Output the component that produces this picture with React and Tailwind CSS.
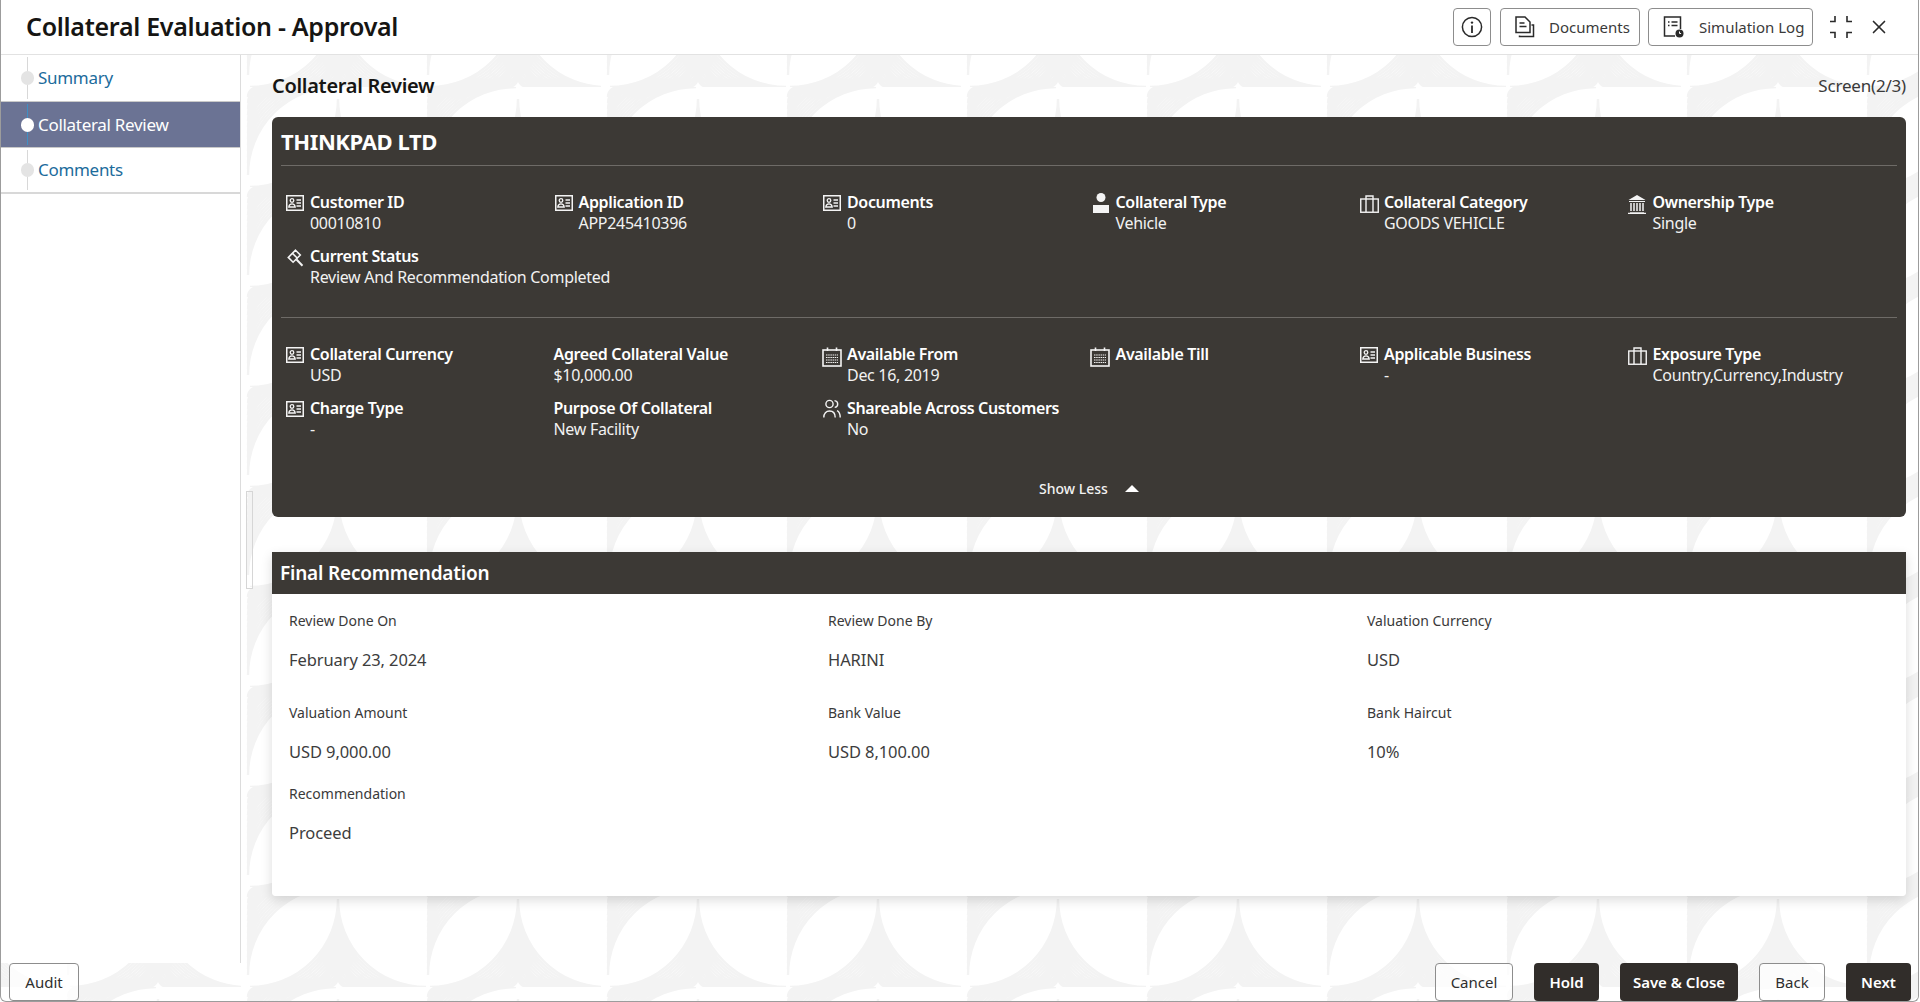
import { X } from "lucide-react";

const font = "font-['Noto_Sans','Open_Sans',sans-serif]";

function IdCard() {
  return (
    <svg width="18" height="16" viewBox="0 0 18 16" fill="none" stroke="currentColor" className="shrink-0">
      <rect x="0.75" y="0.75" width="16.5" height="14.5" strokeWidth="1.5" />
      <circle cx="6" cy="5.5" r="1.8" strokeWidth="1.3" />
      <path d="M2.8 12c.3-2.4 1.6-3.2 3.2-3.2s2.9.8 3.2 3.2z" strokeWidth="1.3" />
      <path d="M10.5 5h4.5M10.5 8h4.5M10.5 11h4.5" strokeWidth="1.4" />
    </svg>
  );
}

function Calendar() {
  return (
    <svg width="20" height="20" viewBox="0 0 20 20" fill="none" stroke="currentColor" className="shrink-0 -ml-[1px]">
      <rect x="1" y="3" width="18" height="16" strokeWidth="1.6" />
      <path d="M5.5 0.5v3.5M14.5 0.5v3.5" strokeWidth="1.6" />
      <path d="M4 8h12M4 10.5h12M4 13h12M4 15.5h12" strokeWidth="1.2" strokeDasharray="1.5 0.7" />
    </svg>
  );
}

function Person() {
  return (
    <svg width="18" height="20" viewBox="0 0 18 20" fill="currentColor" className="shrink-0 -mt-[2px]">
      <circle cx="9" cy="4.5" r="4.5" />
      <rect x="1" y="12" width="16" height="8" />
    </svg>
  );
}

function Briefcase() {
  return (
    <svg width="19" height="18" viewBox="0 0 19 18" fill="none" stroke="currentColor" strokeWidth="1.4" className="shrink-0">
      <rect x="0.75" y="4" width="17.5" height="13.25" />
      <path d="M6 17V1h7v16" />
    </svg>
  );
}

function Bank() {
  return (
    <svg width="20" height="20" viewBox="0 0 20 20" fill="none" stroke="currentColor" className="shrink-0 -ml-[1px] -mt-[1px]">
      <path d="M10 1L1.5 6h17z" fill="currentColor" stroke="none" />
      <path d="M2 7.5h16M3 18.8h14M1 19.3h18" strokeWidth="1.2" />
      <path d="M4 9v8M7 9v8M10 9v8M13 9v8M16 9v8" strokeWidth="1.5" />
    </svg>
  );
}

function Gavel() {
  return (
    <svg width="18" height="18" viewBox="0 0 18 18" fill="none" stroke="currentColor" strokeWidth="1.6" className="shrink-0">
      <path d="M9.5 1.2l4.8 4.8-7.2 7.2-4.8-4.8z" />
      <path d="M6.5 4.4l4.9 4.9" />
      <path d="M10.5 10.5l6 6.2" strokeWidth="2" />
    </svg>
  );
}

function Users() {
  return (
    <svg width="18" height="20" viewBox="0 0 18 20" fill="none" stroke="currentColor" strokeWidth="1.4" className="shrink-0 -mt-[2px]">
      <circle cx="6.5" cy="5" r="3.6" />
      <path d="M0.8 18.5c0-4.2 2.4-6.5 5.7-6.5s5.7 2.3 5.7 6.5" />
      <path d="M11.5 1.6c2 .2 3.2 1.6 3.2 3.4s-1.2 3.2-3 3.4M14 11.6c2 .9 3.2 3.3 3.2 6.9" />
    </svg>
  );
}

function Info() {
  return (
    <svg width="22" height="22" viewBox="0 0 22 22" fill="none" stroke="currentColor" strokeWidth="1.5">
      <circle cx="11" cy="11" r="9.6" />
      <circle cx="11" cy="6.6" r="1.2" fill="currentColor" stroke="none" />
      <path d="M11 9.5v7.5" strokeWidth="1.8" />
    </svg>
  );
}

function DocIcon() {
  return (
    <svg width="20" height="22" viewBox="0 0 20 22" fill="none" stroke="#2a2a2a" strokeWidth="1.5">
      <path d="M1 1h9l5 5v10.5H1z" />
      <path d="M4.5 7h5M4.5 10.5h7" />
      <path d="M4.5 19.5v1h14V9h-2" />
    </svg>
  );
}

function LogIcon() {
  return (
    <svg width="22" height="22" viewBox="0 0 22 22" fill="none" stroke="#2a2a2a" strokeWidth="1.5">
      <path d="M12 20H1.5V1h16v12" />
      <path d="M5 6h1.5M8.5 6h6M5 9.5h1.5M8.5 9.5h6" />
      <circle cx="16.5" cy="17.5" r="4" fill="#2a2a2a" stroke="none" />
      <path d="M16.5 15.5v2h1.6" stroke="#fff" strokeWidth="1" />
    </svg>
  );
}

function Collapse() {
  return (
    <svg width="24" height="24" viewBox="0 0 24 24" fill="none" stroke="#2a2a2a" strokeWidth="1.6">
      <path d="M1 6.5h5V1M18 1v5.5h5M1 17.5h5V23M23 17.5h-5V23" />
    </svg>
  );
}

function Pattern() {
  const radii = [10, 16, 22, 28, 34, 40, 46, 52, 58, 64, 70, 76, 82, 88];
  const arcs = (cx, cy, sx, sy) =>
    radii.map((r) => `M${cx + sx * r} ${cy}A${r} ${r} 0 0 ${sx * sy > 0 ? 0 : 1} ${cx} ${cy + sy * r}`).join("");
  return (
    <svg className="absolute inset-0 w-full h-full" aria-hidden="true">
      <defs>
        <pattern id="tile" x="240" y="87" width="360" height="100" patternUnits="userSpaceOnUse">
          <path
            d={arcs(97, 100, 1, -1) + arcs(97, 100, -1, -1) + arcs(277, 100, -1, -1) + arcs(277, 100, 1, -1) + arcs(187, 0, 1, 1) + arcs(7, 0, 1, 1)}
            fill="none"
            stroke="#f3f3f3"
            strokeWidth="2.4"
          />
        </pattern>
      </defs>
      <rect width="100%" height="100%" fill="url(#tile)" />
    </svg>
  );
}

function Field({ icon, label, value }) {
  return (
    <div className={`flex h-[42px] text-white ${icon ? "gap-[6px]" : "-ml-[1px]"}`}>
      {icon && <div className="w-[18px] flex justify-center pt-[3px] text-[#f4f4f4]">{icon}</div>}
      <div>
        <div className="text-[16px] leading-[21px] font-semibold tracking-[-0.35px] whitespace-nowrap">{label}</div>
        <div className="text-[16px] leading-[21px] tracking-[-0.3px] text-[#f2f2f2] whitespace-nowrap">{value}</div>
      </div>
    </div>
  );
}

function NavItem({ label, active, last }) {
  return (
    <div className={`relative flex items-center gap-[4px] pl-[20px] h-[46px] ${active ? "bg-[#6b7394] border-y border-[#c9c9c9] h-[47px]" : ""} ${last ? "border-b-2 border-[#d8d8d8]" : ""}`}>
      <div className={`absolute left-[26px] top-[2px] bottom-[2px] w-px ${active ? "bg-[#3f8fc4]" : "bg-[#d8d8d8]"}`} />
      <div className={`relative w-[13px] h-[14px] rounded-full ${active ? "bg-white" : "bg-[#e4e4e4]"}`} />
      <span className={`text-[17px] tracking-[-0.3px] ${active ? "text-white" : "text-[#1c6c9c]"}`}>{label}</span>
    </div>
  );
}

function Recommendation({ label, value, className = "" }) {
  return (
    <div className={className}>
      <div className="text-[14px] leading-[20px] text-[#3a3a3a]">{label}</div>
      <div className="mt-[17px] text-[16.5px] leading-[24px] text-[#3d3d3d] tracking-[-0.1px]">{value}</div>
    </div>
  );
}

function Button({ dark, children, className = "" }) {
  return (
    <button className={`h-[38px] rounded-[4px] text-[15px] ${dark ? "bg-[#312d2a] text-white font-semibold" : "bg-white/70 border border-[#8d8d8d] text-[#2f2f2f]"} ${className}`}>
      {children}
    </button>
  );
}

export default function App() {
  return (
    <div className={`${font} relative w-[1919px] h-[1002px] flex flex-col bg-white border-x border-b border-[#9c9c9c] rounded-b-[6px] overflow-hidden text-[#161513]`}>
      <Pattern />
      <header className="relative h-[55px] shrink-0 flex items-center justify-between pl-[25px] pr-[28px] bg-white border-b border-[#e2e2e2]">
        <h1 className="text-[25px] font-semibold tracking-[-0.3px]">Collateral Evaluation - Approval</h1>
        <div className="flex items-center">
          <button className="w-[38px] h-[38px] rounded-[4px] border border-[#8d8d8d] flex items-center justify-center text-[#2a2a2a]">
            <Info />
          </button>
          <button className="ml-[9px] w-[140px] h-[38px] rounded-[4px] border border-[#8d8d8d] flex items-center pl-[14px] gap-[14px] text-[15px] text-[#3a3a3a]">
            <DocIcon />
            Documents
          </button>
          <button className="ml-[8px] w-[165px] h-[38px] rounded-[4px] border border-[#8d8d8d] flex items-center pl-[14px] gap-[14px] text-[15px] text-[#3a3a3a]">
            <LogIcon />
            Simulation Log
          </button>
          <div className="ml-[16px]"><Collapse /></div>
          <X className="ml-[15px] text-[#2a2a2a]" size={22} strokeWidth={1.8} />
        </div>
      </header>

      <div className="relative flex-1 flex min-h-0">
        <aside className="w-[240px] shrink-0 bg-white border-r border-[#dcdcdc]">
          <NavItem label="Summary" />
          <NavItem label="Collateral Review" active />
          <NavItem label="Comments" last />
        </aside>

        <div className="absolute left-[245px] top-[436px] w-[7px] h-[98px] border border-[#d6d6d6]" />

        <main className="flex-1 min-w-0 pl-[31px] pr-[12px]">
          <div className="flex items-center justify-between h-[62px] pb-[1px]">
            <h2 className="text-[20px] font-semibold tracking-[-0.3px]">Collateral Review</h2>
            <span className="text-[17px] text-[#3a3a3a] tracking-[-0.2px]">Screen(2/3)</span>
          </div>

          <section className="h-[400px] bg-[#3c3935] rounded-[6px] text-white">
            <div className="mx-[9px] h-[49px] flex items-center border-b border-[#6e6b67]">
              <div className="text-[22px] font-bold tracking-[-0.4px]">THINKPAD LTD</div>
            </div>
            <div className="mx-[9px] pl-[5px] pt-[26px] pb-[29px] grid grid-cols-6 gap-y-[12px] border-b border-[#6e6b67]">
              <Field icon={<IdCard />} label="Customer ID" value="00010810" />
              <Field icon={<IdCard />} label="Application ID" value="APP245410396" />
              <Field icon={<IdCard />} label="Documents" value="0" />
              <Field icon={<Person />} label="Collateral Type" value="Vehicle" />
              <Field icon={<Briefcase />} label="Collateral Category" value="GOODS VEHICLE" />
              <Field icon={<Bank />} label="Ownership Type" value="Single" />
              <Field icon={<Gavel />} label="Current Status" value="Review And Recommendation Completed" />
            </div>
            <div className="mx-[9px] pl-[5px] pt-[26px] grid grid-cols-6 gap-y-[12px]">
              <Field icon={<IdCard />} label="Collateral Currency" value="USD" />
              <Field label="Agreed Collateral Value" value="$10,000.00" />
              <Field icon={<Calendar />} label="Available From" value="Dec 16, 2019" />
              <Field icon={<Calendar />} label="Available Till" value="" />
              <Field icon={<IdCard />} label="Applicable Business" value="-" />
              <Field icon={<Briefcase />} label="Exposure Type" value="Country,Currency,Industry" />
              <Field icon={<IdCard />} label="Charge Type" value="-" />
              <Field label="Purpose Of Collateral" value="New Facility" />
              <Field icon={<Users />} label="Shareable Across Customers" value="No" />
            </div>
            <div className="mt-[38px] flex items-center justify-center gap-[17px] text-[14px] font-medium text-[#f2f2f2]">
              Show Less
              <span className="w-0 h-0 border-x-[7px] border-x-transparent border-b-[7px] border-b-white" />
            </div>
          </section>

          <section className="mt-[35px] shadow-[0_4px_12px_rgba(0,0,0,0.14)] rounded-b-[4px]">
            <div className="h-[42px] bg-[#3c3935] flex items-center pl-[8px] text-[19px] font-semibold text-white tracking-[-0.2px]">
              Final Recommendation
            </div>
            <div className="h-[302px] bg-white rounded-b-[4px] pl-[17px] pt-[17px] grid grid-cols-3 content-start gap-y-[20px]">
              <Recommendation className="mb-[11px]" label="Review Done On" value="February 23, 2024" />
              <Recommendation className="mb-[11px]" label="Review Done By" value="HARINI" />
              <Recommendation className="mb-[11px]" label="Valuation Currency" value="USD" />
              <Recommendation label="Valuation Amount" value="USD 9,000.00" />
              <Recommendation label="Bank Value" value="USD 8,100.00" />
              <Recommendation label="Bank Haircut" value="10%" />
              <Recommendation label="Recommendation" value="Proceed" />
            </div>
          </section>
        </main>
      </div>

      <footer className="relative h-[38px] shrink-0 flex items-center justify-between pl-[8px] pr-[7px]">
        <Button className="w-[70px]">Audit</Button>
        <div className="flex gap-[21px]">
          <Button className="w-[78px]">Cancel</Button>
          <Button dark className="w-[65px]">Hold</Button>
          <Button dark className="w-[118px]">Save &amp; Close</Button>
          <Button className="w-[66px]">Back</Button>
          <Button dark className="w-[65px]">Next</Button>
        </div>
      </footer>
    </div>
  );
}
